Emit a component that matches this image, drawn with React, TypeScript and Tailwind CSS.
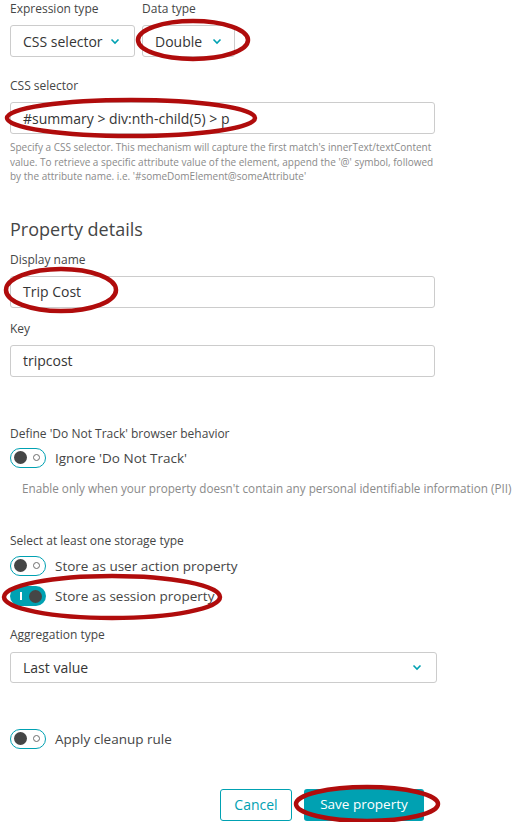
import React from 'react';

const FONT = { fontFamily: '"Open Sans", "Noto Sans", sans-serif' };

function Chevron() {
  return (
    <svg width="10" height="7" viewBox="0 0 10 7" className="shrink-0">
      <path d="M1.5 1.5 L5 5 L8.5 1.5" fill="none" stroke="#00a1b2" strokeWidth="1.6" />
    </svg>
  );
}

function Label({ children, className = '' }: { children: React.ReactNode; className?: string }) {
  return <div className={`text-[12px] leading-[18px] text-[#454646] ${className}`}>{children}</div>;
}

function TextInput({ value, className = '' }: { value: string; className?: string }) {
  return (
    <div className={`h-[32px] w-[425px] rounded-[3px] border border-[#cccccc] px-[12px] flex items-center text-[14px] text-[#353535] ${className}`}>
      {value}
    </div>
  );
}

function Toggle({ on = false, label, className = '' }: { on?: boolean; label: string; className?: string }) {
  return (
    <div className={`flex items-center h-[21px] ${className}`}>
      {on ? (
        <div className="relative h-[20px] w-[36px] rounded-full bg-[#00a1b2] shrink-0">
          <span className="absolute left-[10px] top-[6px] h-[8px] w-[1.5px] bg-white" />
          <span className="absolute right-[4px] top-[3.5px] h-[13px] w-[13px] rounded-full bg-[#454646]" />
        </div>
      ) : (
        <div className="relative h-[20px] w-[36px] rounded-full border-[1.5px] border-[#00a1b2] shrink-0">
          <span className="absolute left-[3px] top-[2px] h-[13px] w-[13px] rounded-full bg-[#454646]" />
          <span className="absolute right-[5px] top-[5px] h-[7px] w-[7px] rounded-full border-[1.5px] border-[#6d6d6d]" />
        </div>
      )}
      <span className="ml-[9px] text-[13.5px] text-[#454646]">{label}</span>
    </div>
  );
}

export default function App() {
  return (
    <div className="relative w-[519px] h-[822px] overflow-hidden bg-white" style={FONT}>
      <div className="px-[10px] flex flex-col">
        {/* Expression / data type */}
        <div className="flex gap-[7px]">
          <div className="flex flex-col">
            <Label>Expression type</Label>
            <div className="mt-[7px] h-[32px] w-[125px] rounded-[3px] border border-[#cccccc] pl-[12px] pr-[14px] flex items-center justify-between text-[14px] text-[#353535]">
              CSS selector
              <Chevron />
            </div>
          </div>
          <div className="flex flex-col">
            <Label>Data type</Label>
            <div className="mt-[7px] h-[32px] w-[93px] rounded-[3px] border border-[#cccccc] pl-[12px] pr-[12px] flex items-center justify-between text-[14px] text-[#353535]">
              Double
              <Chevron />
            </div>
          </div>
        </div>

        <Label className="mt-[20px]">CSS selector</Label>
        <TextInput className="mt-[7px]" value="#summary > div:nth-child(5) > p" />
        <p className="mt-[6px] w-[430px] text-[10px] leading-[14.5px] text-[#8a8a8a]">
          Specify a CSS selector. This mechanism will capture the first match's innerText/textContent value. To retrieve a specific attribute value of the element, append the '@' symbol, followed by the attribute name. i.e. '#someDomElement@someAttribute'
        </p>

        <h2 className="mt-[33px] text-[18px] leading-[24px] text-[#454646]">Property details</h2>
        <Label className="mt-[10px]">Display name</Label>
        <TextInput className="mt-[7px]" value="Trip Cost" />
        <Label className="mt-[12px]">Key</Label>
        <TextInput className="mt-[7px]" value="tripcost" />

        <Label className="mt-[48px]">Define 'Do Not Track' browser behavior</Label>
        <Toggle className="mt-[5px]" label="Ignore 'Do Not Track'" />
        <div className="mt-[11px] pl-[12px] text-[11.7px] leading-[16px] text-[#8a8a8a] whitespace-nowrap">
          Enable only when your property doesn't contain any personal identifiable information (PII)
        </div>

        <Label className="mt-[36px]">Select at least one storage type</Label>
        <Toggle className="mt-[6px]" label="Store as user action property" />
        <Toggle className="mt-[9px]" on label="Store as session property" />

        <Label className="mt-[19px]">Aggregation type</Label>
        <div className="mt-[8px] h-[31px] w-[427px] rounded-[3px] border border-[#cccccc] pl-[12px] pr-[14px] flex items-center justify-between text-[14px] text-[#353535]">
          Last value
          <Chevron />
        </div>

        <Toggle className="mt-[46px]" label="Apply cleanup rule" />

        <div className="mt-[39px] w-[414px] flex justify-end gap-[12px]">
          <button className="h-[32px] w-[72px] rounded-[3px] border border-[#00a1b2] bg-white text-[14px] text-[#00a1b2]">
            Cancel
          </button>
          <button className="h-[32px] w-[120px] rounded-[3px] bg-[#00a1b2] text-[13.5px] font-medium text-white">
            Save property
          </button>
        </div>
      </div>

      {/* red annotation ellipses */}
      <svg className="pointer-events-none absolute inset-0" width="519" height="822">
        <g fill="none" stroke="#b00c0c" strokeWidth="4.5">
          <ellipse cx="193" cy="40" rx="55" ry="19" />
          <ellipse cx="131" cy="118" rx="124" ry="18" />
          <ellipse cx="61" cy="290" rx="55" ry="21" />
          <ellipse cx="112" cy="597" rx="108" ry="21" />
          <ellipse cx="367" cy="804" rx="71" ry="17" />
        </g>
      </svg>
    </div>
  );
}
